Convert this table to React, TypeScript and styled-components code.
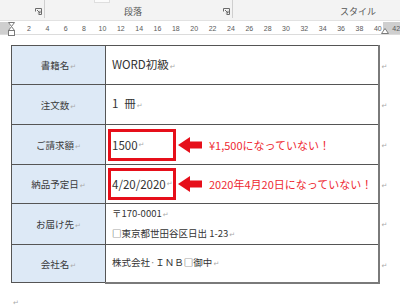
import { createGlobalStyle, styled } from "styled-components";

const GlobalStyle = createGlobalStyle`
  body {
    margin: 0;
    background: #ffffff;
    overflow: hidden;
    font-family: "Noto Sans CJK JP", "Noto Sans", sans-serif;
  }
`;

const Screen = styled.div`
  width: 400px;
  height: 306px;
  overflow: hidden;
  background: #ffffff;
`;

const Ribbon = styled.div`
  display: flex;
  height: 20px;
  background: #f3f3f3;
  border-bottom: 1px solid #e2e2e2;
  overflow: hidden;
`;

const Group = styled.div<{ $width: number }>`
  flex: 0 0 ${(p) => p.$width}px;
  height: 18px;
  display: flex;
  flex-direction: column;
  justify-content: space-between;
  border-right: 1px solid #cfcfcf;
  box-sizing: border-box;
`;

const ButtonStub = styled.div`
  margin-left: 49px;
  width: 14px;
  height: 2px;
  background: #fbfbfb;
  border: 1px solid #dedede;
  border-top: none;
`;

const GroupFoot = styled.div`
  display: flex;
  align-items: center;
  justify-content: space-between;
  height: 9px;
  padding-bottom: 2px;
`;

const GroupLabel = styled.span<{ $width: number }>`
  flex: 0 0 ${(p) => p.$width}px;
  text-align: center;
  font-size: 9px;
  line-height: 9px;
  color: #555555;
  white-space: nowrap;
`;

const Ruler = styled.div`
  position: relative;
  height: 12px;
  margin-top: 1px;
  display: flex;
  align-items: center;
  padding-left: 19.8px;
  background: linear-gradient(to right, #cfcfcf 0 10px, #ffffff 10px 383px, #cfcfcf 383px);
  border-bottom: 1px solid #dcdcdc;
`;

const RulerNum = styled.span`
  flex: 0 0 18.37px;
  text-align: center;
  font-family: "Liberation Sans", sans-serif;
  font-size: 7px;
  color: #5a5a5a;
`;

const Marker = styled.svg<{ $left: number; $top: number }>`
  position: absolute;
  left: ${(p) => p.$left}px;
  top: ${(p) => p.$top}px;
`;

const Page = styled.div`
  padding: 10px 0 0 11px;
`;

const Table = styled.table`
  border-collapse: collapse;
  table-layout: fixed;
`;

const Row = styled.tr<{ $h: number }>`
  height: ${(p) => p.$h}px;
`;

const LabelCell = styled.td`
  width: 93px;
  padding: 0;
  background: #dde9f6;
  border: 1px solid #555555;
  text-align: center;
  vertical-align: middle;
  font-size: 9.5px;
  color: #3a3a3a;
`;

const ValueCell = styled.td<{ $small?: boolean; $boxed?: boolean }>`
  width: 273px;
  box-sizing: border-box;
  padding: 0 0 0 ${(p) => (p.$boxed ? 2 : 6)}px;
  border: 1px solid #555555;
  border-right: 2px solid #7a7a7a;
  vertical-align: middle;
  font-size: ${(p) => (p.$small ? 9.5 : 11.5)}px;
  line-height: ${(p) => (p.$small ? 18 : 14)}px;
  color: #333333;
  .last & {
    border-bottom: 2px solid #7a7a7a;
  }
`;

const MarkCell = styled.td`
  padding: 4px 0 0 1px;
  vertical-align: top;
  border: none;
`;

const Mark = styled.span`
  font-family: "DejaVu Sans", sans-serif;
  font-size: 7px;
  color: #aaaaaa;
  margin-left: 1px;
`;

const SpaceMark = styled.span`
  color: #888888;
`;

const Flagged = styled.div`
  display: flex;
  align-items: center;
`;

const RedBox = styled.span`
  display: inline-flex;
  align-items: center;
  box-sizing: border-box;
  width: 68px;
  height: 32px;
  padding-left: 1px;
  border: 3px solid #e60f1a;
`;

const Arrow = styled.svg`
  margin: 0 7px 0 2px;
  flex: none;
`;

const Note = styled.span`
  font-size: 11px;
  color: #ee2a32;
  white-space: nowrap;
`;

const BelowMark = styled.div`
  padding: 2px 0 0 1px;
`;

function Launcher() {
  return (
    <svg width="7" height="7" viewBox="0 0 7 7" style={{ flex: "none", marginRight: 2 }}>
      <path d="M0.5 3.5V0.5H6.5V6.5H3.5" fill="none" stroke="#6a6a6a" strokeWidth="1" />
      <path d="M2 2L5 5M5 2.8V5H2.8" fill="none" stroke="#6a6a6a" strokeWidth="1" />
    </svg>
  );
}

function RedArrow() {
  return (
    <Arrow width="24" height="16" viewBox="0 0 24 16">
      <path d="M0 8L12 0V4.5H24V11.5H12V16Z" fill="#e60f1a" />
    </Arrow>
  );
}

const P = () => <Mark>↵</Mark>;

const nums = Array.from({ length: 21 }, (_, i) => (i + 1) * 2);

export default function App() {
  return (
    <Screen>
      <GlobalStyle />
      <Ribbon>
        <Group $width={45}>
          <div />
          <GroupFoot>
            <GroupLabel $width={30} />
            <Launcher />
          </GroupFoot>
        </Group>
        <Group $width={188}>
          <ButtonStub />
          <GroupFoot>
            <GroupLabel $width={176}>段落</GroupLabel>
            <Launcher />
          </GroupFoot>
        </Group>
        <Group $width={250}>
          <div />
          <GroupFoot>
            <GroupLabel $width={250}>スタイル</GroupLabel>
          </GroupFoot>
        </Group>
      </Ribbon>
      <Ruler>
        {nums.map((n) => (
          <RulerNum key={n}>{n}</RulerNum>
        ))}
        <Marker $left={8} $top={0} width="7" height="14" viewBox="0 0 7 14">
          <path d="M0.5 0.5H6.5L3.5 4.5Z" fill="#ffffff" stroke="#7a7a7a" />
          <path d="M3.5 4.5L6.5 8.5H0.5Z" fill="#ffffff" stroke="#7a7a7a" />
          <rect x="0.5" y="8.5" width="6" height="5" fill="#ffffff" stroke="#7a7a7a" />
        </Marker>
        <Marker $left={381} $top={6} width="8" height="6" viewBox="0 0 8 6">
          <path d="M4 0.5L7.5 5.5H0.5Z" fill="#ffffff" stroke="#7a7a7a" />
        </Marker>
      </Ruler>
      <Page>
        <Table>
          <tbody>
            <Row $h={39}>
              <LabelCell>書籍名<P /></LabelCell>
              <ValueCell>WORD初級<P /></ValueCell>
              <MarkCell><P /></MarkCell>
            </Row>
            <Row $h={40}>
              <LabelCell>注文数<P /></LabelCell>
              <ValueCell>1{"\u2002"}冊<P /></ValueCell>
              <MarkCell><P /></MarkCell>
            </Row>
            <Row $h={40}>
              <LabelCell>ご請求額<P /></LabelCell>
              <ValueCell $boxed>
                <Flagged>
                  <RedBox>1500<P /></RedBox>
                  <RedArrow />
                  <Note>¥1,500になっていない！</Note>
                </Flagged>
              </ValueCell>
              <MarkCell><P /></MarkCell>
            </Row>
            <Row $h={39}>
              <LabelCell>納品予定日<P /></LabelCell>
              <ValueCell $boxed>
                <Flagged>
                  <RedBox>4/20/2020<P /></RedBox>
                  <RedArrow />
                  <Note>2020年4月20日になっていない！</Note>
                </Flagged>
              </ValueCell>
              <MarkCell><P /></MarkCell>
            </Row>
            <Row $h={41}>
              <LabelCell>お届け先<P /></LabelCell>
              <ValueCell $small>
                〒170-0001<P />
                <br />
                □東京都世田谷区日出 1-23<P />
              </ValueCell>
              <MarkCell><P /></MarkCell>
            </Row>
            <Row $h={38} className="last">
              <LabelCell>会社名<P /></LabelCell>
              <ValueCell $small>
                株式会社<SpaceMark>·</SpaceMark>ＩＮＢ□御中<P />
              </ValueCell>
              <MarkCell><P /></MarkCell>
            </Row>
          </tbody>
        </Table>
        <BelowMark><P /></BelowMark>
      </Page>
    </Screen>
  );
}
